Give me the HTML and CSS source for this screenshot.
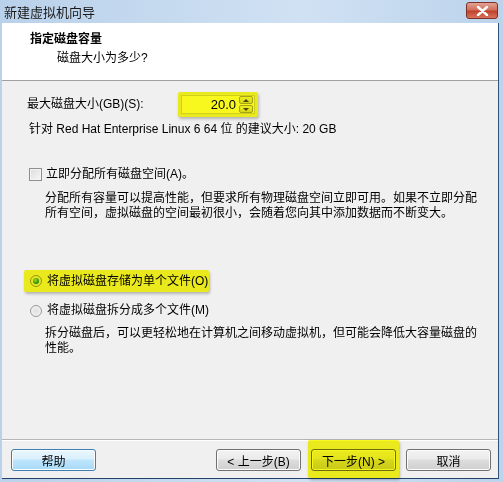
FILE: index.html
```html
<!DOCTYPE html>
<html lang="zh-CN">

<head>
    <meta charset="UTF-8">
    <title>新建虚拟机向导</title>
    <link rel="stylesheet" href="styles.css">
</head>

<body>
    <div class="window">
        <div class="titlebar">
            <span class="title">新建虚拟机向导</span>
            <span class="close-btn">
                <svg width="13" height="10" viewBox="0 0 13 10">
                    <path d="M2 1 L11 9 M11 1 L2 9" stroke="#fff" stroke-width="2.4" stroke-linecap="round" />
                </svg>
            </span>
        </div>

        <div class="client">
            <div class="header">
                <div class="header-title">指定磁盘容量</div>
                <div class="header-sub">磁盘大小为多少?</div>
            </div>

            <div class="content">
                <div class="size-row">
                    <span class="size-label">最大磁盘大小(GB)(S):</span>
                    <span class="hl hl-spin">
                        <span class="spinbox">
                            <span class="spin-value">20.0</span>
                            <span class="spin-btns">
                                <span class="spin-btn"><span class="tri-up"></span></span>
                                <span class="spin-btn"><span class="tri-down"></span></span>
                            </span>
                        </span>
                    </span>
                </div>
                <div class="hint">针对 Red Hat Enterprise Linux 6 64 位 的建议大小: 20 GB</div>

                <label class="check-row">
                    <span class="checkbox"></span>
                    <span>立即分配所有磁盘空间(A)。</span>
                </label>
                <div class="desc desc-check">分配所有容量可以提高性能，但要求所有物理磁盘空间立即可用。如果不立即分配所有空间，虚拟磁盘的空间最初很小，会随着您向其中添加数据而不断变大。</div>

                <div class="hl hl-radio">
                    <span class="radio checked"></span>
                    <span>将虚拟磁盘存储为单个文件(O)</span>
                </div>
                <div class="radio-row">
                    <span class="radio"></span>
                    <span>将虚拟磁盘拆分成多个文件(M)</span>
                </div>
                <div class="desc desc-radio">拆分磁盘后，可以更轻松地在计算机之间移动虚拟机，但可能会降低大容量磁盘的性能。</div>
            </div>

            <div class="footer">
                <button class="btn">帮助</button>
                <div class="footer-right">
                    <button class="btn">&lt; 上一步(B)</button>
                    <span class="hl hl-next"><button class="btn">下一步(N) &gt;</button></span>
                    <button class="btn">取消</button>
                </div>
            </div>
        </div>
    </div>
</body>

</html>
```

FILE: styles.css
```css
* {
    box-sizing: border-box;
}

body {
    margin: 0;
    font-family: "Liberation Sans", "Noto Sans CJK SC", sans-serif;
    font-size: 12px;
    color: #000;
    background: #c3d8ee;
}

.window {
    width: 503px;
    height: 482px;
    display: flex;
    flex-direction: column;
    background: linear-gradient(to right, #b9d1ea, #d0e1f3 60%, #bcd3eb);
    overflow: hidden;
}

.titlebar {
    height: 23px;
    display: flex;
    align-items: center;
    justify-content: space-between;
    padding: 0 5px 0 4px;
}

.title {
    font-size: 13px;
    color: #1a1a1a;
}

.close-btn {
    width: 32px;
    height: 17px;
    margin-top: -2px;
    border: 1px solid #7d3127;
    border-radius: 3px;
    background: linear-gradient(#e3a294, #d0705c 45%, #c0432c 55%, #d8735d);
    display: flex;
    align-items: center;
    justify-content: center;
}

.client {
    flex: 1;
    margin: 0 4px 3px 2px;
    border-right: 1px solid #33547a;
    border-bottom: 1px solid #23426a;
    background: #f0f0f0;
    display: flex;
    flex-direction: column;
}

.header {
    height: 58px;
    background: #fff;
    border-bottom: 1px solid #a0a0a0;
    padding: 9px 0 0 28px;
    line-height: 15px;
}

.header-title {
    font-weight: bold;
}

.header-sub {
    margin: 4px 0 0 27px;
}

.content {
    flex: 1;
    padding: 11px 0 0 25px;
    line-height: 15px;
}

.size-row {
    display: flex;
    align-items: center;
    height: 25px;
}

.size-label {
    width: 151px;
}

.hl {
    position: relative;
}

.hl::after {
    content: "";
    position: absolute;
    background: #f8f81e;
    mix-blend-mode: multiply;
    box-shadow: 1px 2px 3px rgba(0, 0, 0, 0.25);
    border-radius: 2px;
    pointer-events: none;
}

.hl-spin {
    display: flex;
    width: 80px;
    height: 25px;
    padding: 3px;
}

.hl-spin::after {
    inset: 0;
}

.spinbox {
    flex: 1;
    display: flex;
    align-items: center;
    justify-content: flex-end;
    background: #fff;
    border: 1px solid #d6d6d6;
}

.spin-value {
    margin-right: 3px;
    font-size: 13px;
}

.spin-btns {
    display: flex;
    flex-direction: column;
    gap: 1px;
    margin-right: 1px;
}

.spin-btn {
    width: 14px;
    height: 8px;
    border: 1px solid #a8a8a8;
    border-radius: 2px;
    background: linear-gradient(#f6f6f6, #dcdcdc);
    display: flex;
    align-items: center;
    justify-content: center;
}

.tri-up {
    border-left: 3px solid transparent;
    border-right: 3px solid transparent;
    border-bottom: 3px solid #4a4a4a;
}

.tri-down {
    border-left: 3px solid transparent;
    border-right: 3px solid transparent;
    border-top: 3px solid #4a4a4a;
}

.hint {
    margin-top: 5px;
    padding-left: 2px;
}

.check-row {
    display: flex;
    align-items: center;
    gap: 4px;
    margin-top: 30px;
    padding-left: 2px;
}

.checkbox {
    width: 13px;
    height: 13px;
    border: 1px solid #8e8f8f;
    background: linear-gradient(135deg, #dcdcdc, #f7f7f7);
    box-shadow: inset 0 0 0 1px #f4f4f4;
}

.desc {
    width: 433px;
    margin-left: 18px;
}

.desc-check {
    margin-top: 9px;
}

.hl-radio {
    display: flex;
    align-items: center;
    gap: 5px;
    width: 185px;
    height: 22px;
    margin: 49px 0 0 -3px;
    padding-left: 6px;
}

.hl-radio::after {
    inset: 0;
}

.radio {
    width: 12px;
    height: 12px;
    border-radius: 50%;
    border: 1px solid #9a9a9a;
    background: radial-gradient(circle, #e0e0e0, #f8f8f8);
    display: flex;
    align-items: center;
    justify-content: center;
}

.radio.checked::before {
    content: "";
    width: 6px;
    height: 6px;
    border-radius: 50%;
    background: radial-gradient(circle at 40% 35%, #a6e3ff, #1e8ad0 70%);
}

.radio-row {
    display: flex;
    align-items: center;
    gap: 5px;
    margin-top: 11px;
    padding-left: 3px;
    color: #000;
}

.desc-radio {
    margin-top: 8px;
}

.footer {
    height: 39px;
    border-top: 1px solid #b5b5b5;
    box-shadow: inset 0 1px 0 #fff;
    display: flex;
    justify-content: space-between;
    padding: 9px 7px 0 9px;
}

.footer-right {
    display: flex;
    gap: 10px;
    height: 22px;
}

.btn {
    width: 85px;
    height: 22px;
    border: 1px solid #707070;
    border-radius: 3px;
    background: linear-gradient(#f2f2f2, #ebebeb 45%, #dddddd 50%, #cfcfcf);
    box-shadow: inset 0 0 0 1px #fcfcfc;
    font-family: "Liberation Sans", "Noto Sans CJK SC", sans-serif;
    font-size: 12px;
    color: #000;
    padding: 0;
}

.btn:first-child {
    border-color: #3c7fb1;
    background: linear-gradient(#eaf6fd, #d9f0fc 45%, #bee6fd 50%, #a7d9f5);
}

.footer-right .btn:first-child {
    border-color: #707070;
    background: linear-gradient(#f2f2f2, #ebebeb 45%, #dddddd 50%, #cfcfcf);
}

.hl-next {
    display: flex;
}

.hl-next::after {
    inset: -9px -3px -7px -3px;
}
```
